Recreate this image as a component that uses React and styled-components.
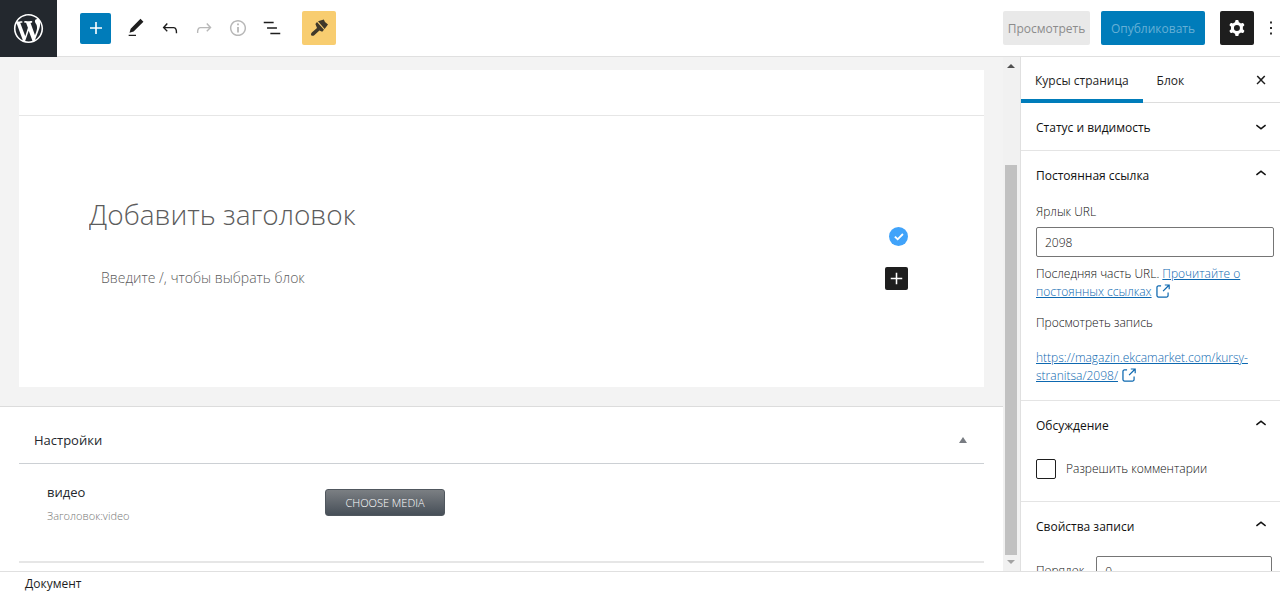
import React, { useState } from "react";
import styled, { createGlobalStyle } from "styled-components";

// Icon outlines, all drawn on a 24x24 grid
const icons = {
  plus: "M18 11.2h-5.2V6h-1.6v5.2H6v1.6h5.2V18h1.6v-5.2H18z",
  pencil: "M20.1 5.1L16.9 2 6.2 12.7l-1.3 4.4 4.5-1.3L20.1 5.1zM4 20.8h8v-1.5H4v1.5z",
  undo: "M18.3 11.7c-.6-.6-1.4-.9-2.3-.9H6.7l2.9-3.3-1.1-1-4.5 5L8.5 16l1-1-2.7-2.7H16c.5 0 .9.2 1.3.5 1 1 1 3.4 1 4.5v.3h1.5v-.2c0-1.5 0-4.3-1.5-5.7z",
  redo: "M15.6 6.5l-1.1 1 2.9 3.3H8c-.9 0-1.7.3-2.3.9-1.4 1.5-1.4 4.2-1.4 5.6v.2h1.5v-.3c0-1.1 0-3.5 1-4.5.3-.3.7-.5 1.3-.5h9.2L14.5 15l1.1 1.1 4.6-4.6-4.6-5z",
  info: "M12 3.2c-4.8 0-8.8 3.9-8.8 8.8 0 4.8 3.9 8.8 8.8 8.8 4.8 0 8.8-3.9 8.8-8.8 0-4.8-4-8.8-8.8-8.8zm0 16c-4 0-7.2-3.3-7.2-7.2C4.8 8 8 4.8 12 4.8s7.2 3.3 7.2 7.2c0 4-3.2 7.2-7.2 7.2zM11 17h2v-6h-2v6zm0-8h2V7h-2v2z",
  list: "M13.8 5.2H3v1.5h10.8V5.2zm-3.6 12v1.5H21v-1.5H10.2zm7.2-6H6.6v1.5h10.8v-1.5z",
  external: "M18.2 17c0 .7-.6 1.2-1.2 1.2H7c-.7 0-1.2-.6-1.2-1.2V7c0-.7.6-1.2 1.2-1.2h3.2V4.2H7C5.5 4.2 4.2 5.5 4.2 7v10c0 1.5 1.2 2.8 2.8 2.8h10c1.5 0 2.8-1.2 2.8-2.8v-3.6h-1.5V17zM14.9 3v1.5h3.7l-6.4 6.4 1.1 1.1 6.4-6.4v3.7h1.5V3h-6.3z",
  up: "M6.5 12.4L12 8l5.5 4.4-.9 1.2L12 10l-4.5 3.6-1-1.2z",
  down: "M17.5 11.6L12 16l-5.5-4.4.9-1.2L12 14l4.5-3.6 1 1.2z",
  close: "M13 11.9l3.3-3.4-1.1-1-3.2 3.3-3.2-3.3-1.1 1 3.3 3.4-3.5 3.6 1 1L12 13l3.5 3.5 1-1z",
  cog: "M10.289 4.836A1 1 0 0111.275 4h1.306a1 1 0 01.987.836l.244 1.466c.787.26 1.503.679 2.108 1.218l1.393-.522a1 1 0 011.216.437l.653 1.13a1 1 0 01-.23 1.273l-1.148.944a6.025 6.025 0 010 2.435l1.149.946a1 1 0 01.23 1.272l-.653 1.13a1 1 0 01-1.216.437l-1.394-.522c-.605.54-1.32.958-2.108 1.218l-.244 1.466a1 1 0 01-.987.836h-1.306a1 1 0 01-.986-.836l-.244-1.466a5.995 5.995 0 01-2.108-1.218l-1.394.522a1 1 0 01-1.217-.436l-.653-1.131a1 1 0 01.23-1.272l1.149-.946a6.026 6.026 0 010-2.435l-1.148-.944a1 1 0 01-.23-1.272l.653-1.131a1 1 0 011.217-.437l1.393.522a5.994 5.994 0 012.108-1.218l.244-1.466zM14.929 12a3 3 0 11-6 0 3 3 0 016 0z",
  more: "M13 19h-2v-2h2v2zm0-6h-2v-2h2v2zm0-6h-2V5h2v2z",
  brush: "M11 5.2L16.8 3.6L18 6L21 8.4L17.6 13zM10 6L17 13.8L15.2 15.8L12.4 14.6L7 19.4Q5.4 20.4 4.2 19.2Q3.4 17.8 4.8 16.4L10 12L8.4 8z",
  check: "M10 17.4L4.8 12.4l2-2L10 13.4l6.9-6.9 2 2z",
};

const Icon = ({ name, size = 24 }) => (
  <svg width={size} height={size} viewBox="0 0 24 24" fill="currentColor" fillRule="evenodd" aria-hidden="true">
    <path d={icons[name]} />
  </svg>
);

const WordPressLogo = () => (
  <svg width="35" height="35" viewBox="-2 -2 24 24" fill="currentColor" aria-hidden="true">
    <path d="M20 10c0-5.51-4.49-10-10-10C4.48 0 0 4.49 0 10c0 5.52 4.48 10 10 10 5.51 0 10-4.48 10-10zM7.78 15.37L4.37 6.22c.55-.02 1.17-.08 1.17-.08.5-.06.44-1.13-.06-1.11 0 0-1.45.11-2.37.11-.18 0-.37 0-.58-.01C4.12 2.69 6.87 1.11 10 1.11c2.33 0 4.45.87 6.05 2.34-.68-.11-1.65.39-1.65 1.58 0 .74.45 1.36.9 2.1.35.61.55 1.36.55 2.46 0 1.49-1.4 5-1.4 5l-3.03-8.37c.54-.02.82-.17.82-.17.5-.05.44-1.25-.06-1.22 0 0-1.44.12-2.38.12-.87 0-2.33-.12-2.33-.12-.5-.03-.56 1.2-.06 1.22l.92.08 1.26 3.41zM17.41 10c.24-.64.74-1.87.43-4.25.7 1.29 1.05 2.71 1.05 4.25 0 3.29-1.73 6.24-4.4 7.78.97-2.59 1.94-5.2 2.92-7.78zM6.1 18.09C3.12 16.65 1.11 13.53 1.11 10c0-1.3.23-2.48.72-3.59C3.25 10.3 4.67 14.2 6.1 18.09zm4.03-6.63l2.58 6.98c-.86.29-1.76.45-2.71.45-.79 0-1.57-.11-2.29-.33.81-2.38 1.62-4.74 2.42-7.1z" />
  </svg>
);

// Sidebar section that folds when its title is clicked
const Panel = ({ title, startOpen, children }) => {
  const [open, setOpen] = useState(startOpen);

  return (
    <PanelSection>
      <PanelTitle>
        <PanelToggle aria-expanded={open} onClick={() => setOpen(!open)}>
          {title}
          <Icon name={open ? "up" : "down"} size={22} />
        </PanelToggle>
      </PanelTitle>
      {open && children}
    </PanelSection>
  );
}

const App = () => {
  const [slug, setSlug] = useState("2098");
  const [order, setOrder] = useState("0");
  const [comments, setComments] = useState(false);
  const [metaOpen, setMetaOpen] = useState(true);

  return (
    <Editor>
      <GlobalStyle />
      <Header>
        <LogoLink href="#" aria-label="WordPress"><WordPressLogo /></LogoLink>
        <Toolbar>
          <InsertButton aria-label="Добавить блок"><Icon name="plus" /></InsertButton>
          <ToolButton aria-label="Инструменты"><Icon name="pencil" size={22} /></ToolButton>
          <ToolButton aria-label="Отменить"><Icon name="undo" size={22} /></ToolButton>
          <ToolButton disabled aria-label="Повторить"><Icon name="redo" size={22} /></ToolButton>
          <ToolButton disabled aria-label="Сведения"><Icon name="info" size={22} /></ToolButton>
          <ToolButton aria-label="Список"><Icon name="list" size={22} /></ToolButton>
          <BrushButton aria-label="Стили"><Icon name="brush" /></BrushButton>
        </Toolbar>
        <Actions>
          <PreviewButton disabled>Просмотреть</PreviewButton>
          <PublishButton disabled>Опубликовать</PublishButton>
          <SettingsButton aria-label="Настройки"><Icon name="cog" /></SettingsButton>
          <MoreButton aria-label="Ещё"><Icon name="more" size={22} /></MoreButton>
        </Actions>
      </Header>

      <Body>
        <Content>
          <Canvas>
            <Sheet>
              <SheetTop />
              <Writing>
                <TitleInput aria-label="Заголовок" placeholder="Добавить заголовок" />
                <CheckRow>
                  <CheckButton aria-label="Проверка"><Icon name="check" size={16} /></CheckButton>
                </CheckRow>
                <BlockRow>
                  <BlockInput aria-label="Блок" placeholder="Введите /, чтобы выбрать блок" />
                  <AddBlockButton aria-label="Добавить блок"><Icon name="plus" size={23} /></AddBlockButton>
                </BlockRow>
              </Writing>
            </Sheet>
          </Canvas>
          <MetaBoxes>
            <MetaHeader>
              <MetaTitle>Настройки</MetaTitle>
              <MetaToggle aria-label="Свернуть" onClick={() => setMetaOpen(!metaOpen)}>
                <Arrow $down={!metaOpen} $height={6} $color="#787c82" />
              </MetaToggle>
            </MetaHeader>
            {
              metaOpen &&
              <MetaBody>
                <MetaLabel>
                  <MetaName>видео</MetaName>
                  <MetaHint>Заголовок:video</MetaHint>
                </MetaLabel>
                <MediaButton>CHOOSE MEDIA</MediaButton>
              </MetaBody>
            }
          </MetaBoxes>
        </Content>

        <ScrollBar aria-hidden="true">
          <Arrow $height={4} $color="#505050" />
          <ScrollTrack><ScrollThumb /></ScrollTrack>
          <Arrow $down $height={4} $color="#a3a3a3" />
        </ScrollBar>

        <Sidebar>
          <Tabs>
            <Tab $active>Курсы страница</Tab>
            <Tab>Блок</Tab>
            <CloseButton aria-label="Закрыть"><Icon name="close" size={24} /></CloseButton>
          </Tabs>
          <Panel title="Статус и видимость" />
          <Panel title="Постоянная ссылка" startOpen>
            <PanelContent>
              <FieldLabel htmlFor="slug">Ярлык URL</FieldLabel>
              <TextInput id="slug" value={slug} onChange={(e) => setSlug(e.target.value)} />
              <Paragraph>
                Последняя часть URL. <Link href="#">Прочитайте о постоянных ссылках<Icon name="external" size={19} /></Link>
              </Paragraph>
              <Caption>Просмотреть запись</Caption>
              <Paragraph>
                <Link href="#">https://magazin.ekcamarket.com/kursy-stranitsa/2098/<Icon name="external" size={19} /></Link>
              </Paragraph>
            </PanelContent>
          </Panel>
          <Panel title="Обсуждение" startOpen>
            <CheckLabel>
              <CheckBox type="checkbox" checked={comments} onChange={() => setComments(!comments)} />
              Разрешить комментарии
            </CheckLabel>
          </Panel>
          <Panel title="Свойства записи" startOpen>
            <OrderRow>
              <label htmlFor="order">Порядок</label>
              <TextInput id="order" value={order} onChange={(e) => setOrder(e.target.value)} />
            </OrderRow>
          </Panel>
        </Sidebar>
      </Body>

      <Footer>Документ</Footer>
    </Editor>
  );
}

export default App;

const GlobalStyle = createGlobalStyle`
  * {
    box-sizing: border-box;
  }
  body {
    margin: 0;
    color: #1e1e1e;
    background-color: white;
    font-family: "Open Sans", "Noto Sans", sans-serif;
    font-size: 12px;
    line-height: 18px;
  }
  button, input {
    font: inherit;
    color: inherit;
  }
  svg {
    flex: none;
  }
`

const Editor = styled.div`
  height: 100vh;
  display: flex;
  flex-direction: column;
`

const Header = styled.header`
  flex: none;
  display: flex;
  align-items: stretch;
  height: 57px;
  border-bottom: 1px solid #e0e0e0;
`

const LogoLink = styled.a`
  width: 57px;
  height: 57px;
  display: flex;
  align-items: center;
  justify-content: center;
  color: white;
  background-color: #23282e;
`

const Toolbar = styled.div`
  flex: 1;
  display: flex;
  align-items: center;
  padding-left: 23px;
`

const IconButton = styled.button`
  display: flex;
  align-items: center;
  justify-content: center;
  padding: 0;
  border: none;
  border-radius: 2px;
  background: none;
`

const InsertButton = styled(IconButton)`
  width: 31px;
  height: 31px;
  margin-right: 8px;
  color: white;
  background-color: #007cba;
`

const ToolButton = styled(IconButton)`
  width: 34px;
  height: 34px;

  &:disabled {
    color: #b8b8b8;
  }
`

const BrushButton = styled(IconButton)`
  width: 34px;
  height: 34px;
  margin-left: 13px;
  color: #40392a;
  background-color: #f8cd70;
`

// Publish controls on the right of the header
const Actions = styled.div`
  display: flex;
  align-items: center;
`

const TextButton = styled.button`
  height: 34px;
  border: none;
  border-radius: 2px;
  padding: 2px 0 0;
`

const PreviewButton = styled(TextButton)`
  width: 87px;
  margin-right: 11px;
  color: #8c8c8c;
  background-color: #e9e9e9;
`

const PublishButton = styled(TextButton)`
  width: 104px;
  margin-right: 15px;
  color: #66b0d6;
  background-color: #007cba;
`

const SettingsButton = styled(IconButton)`
  width: 34px;
  height: 34px;
  color: white;
  background-color: #1e1e1e;
`

const MoreButton = styled(IconButton)`
  width: 26px;
  height: 34px;
  padding-left: 8px;
`

const Body = styled.div`
  flex: 1;
  min-height: 0;
  display: flex;
`

const Content = styled.main`
  flex: 1;
  min-width: 0;
  overflow: hidden;
`

const Canvas = styled.div`
  padding: 13px 19px 19px;
  background-color: #f3f3f3;
`

const Sheet = styled.div`
  background-color: white;
`

const SheetTop = styled.div`
  height: 46px;
  border-bottom: 1px solid #e6e6e6;
`

const Writing = styled.div`
  padding: 76px 76px 97px 70px;
`

const PlainInput = styled.input`
  flex: 1;
  width: 100%;
  padding: 0;
  border: none;
  outline: none;
  background: none;
  font-weight: 320;

  &::placeholder {
    color: #5c5c5c;
    opacity: 1;
  }
`

const TitleInput = styled(PlainInput)`
  display: block;
  height: 44px;
  font-size: 28px;
`

const CheckRow = styled.div`
  display: flex;
  justify-content: flex-end;
  height: 31px;
`

const CheckButton = styled(IconButton)`
  width: 19px;
  height: 19px;
  margin-top: -9px;
  border-radius: 50%;
  color: white;
  background-color: #40a3fa;
`

const BlockRow = styled.div`
  display: flex;
  align-items: center;
  padding-left: 12px;
`

const BlockInput = styled(PlainInput)`
  height: 23px;
  padding-bottom: 3px;
  font-size: 14px;
`

const AddBlockButton = styled(IconButton)`
  width: 23px;
  height: 23px;
  color: white;
  background-color: #1e1e1e;
`

const MetaBoxes = styled.section`
  padding: 0 19px;
  border-top: 1px solid #dcdcdc;
`

const MetaHeader = styled.div`
  display: flex;
  align-items: center;
  justify-content: space-between;
  height: 57px;
  padding: 10px 15px 0;
  border-bottom: 1px solid #ccd0d4;
`

const MetaTitle = styled.h2`
  margin: 0;
  font-size: 13px;
  font-weight: 520;
  color: #23282d;
`

const MetaToggle = styled(IconButton)`
  width: 12px;
  height: 20px;
`

const Arrow = styled.span`
  width: 0;
  height: 0;
  border: 4px solid transparent;
  border-top: ${props => props.$down ? `${props.$height}px solid ${props.$color}` : "none"};
  border-bottom: ${props => props.$down ? "none" : `${props.$height}px solid ${props.$color}`};
`

const MetaBody = styled.div`
  display: flex;
  align-items: flex-start;
  height: 99px;
  padding: 19px 28px;
  border-bottom: 2px solid #e6e6e6;
`

const MetaLabel = styled.div`
  width: 278px;
`

const MetaName = styled.div`
  font-size: 13px;
  font-weight: 520;
  color: #23282d;
`

const MetaHint = styled.div`
  margin-top: 6px;
  font-size: 11px;
  font-weight: 320;
  color: #777;
`

const MediaButton = styled.button`
  width: 120px;
  height: 27px;
  margin-top: 6px;
  padding: 0;
  border: 1px solid #50575e;
  border-radius: 3px;
  font-size: 11px;
  font-weight: 350;
  color: white;
  background: linear-gradient(#7b7f83, #474f58);
`

const ScrollBar = styled.div`
  flex: none;
  display: flex;
  flex-direction: column;
  align-items: center;
  width: 17px;
  padding: 7px 3px 7px 2px;
  background-color: #f1f1f1;
`

const ScrollTrack = styled.div`
  flex: 1;
  display: flex;
  flex-direction: column;
  justify-content: flex-end;
  width: 12px;
  margin: 5px 0;
`

const ScrollThumb = styled.div`
  height: 81%;
  background-color: #c1c1c1;
`

const Sidebar = styled.aside`
  flex: none;
  width: 260px;
  border-left: 1px solid #e0e0e0;
  overflow: hidden;
`

const Tabs = styled.div`
  display: flex;
  height: 46px;
  border-bottom: 1px solid #ddd;
`

const Tab = styled.button`
  height: 46px;
  padding: 2px 14px 0;
  border: none;
  background: none;
  box-shadow: ${props => props.$active ? "inset 0 -4px #007cba" : "none"};
`

const CloseButton = styled(IconButton)`
  width: 24px;
  margin-left: auto;
  margin-right: 7px;
`

const PanelSection = styled.section`
  border-bottom: 1px solid #e4e4e4;
  font-weight: 350;
  color: #111;
`

const PanelTitle = styled.h2`
  margin: 0;
  font-size: 12px;
  font-weight: 520;
`

const PanelToggle = styled.button`
  display: flex;
  align-items: center;
  justify-content: space-between;
  width: 100%;
  height: 47px;
  padding: 2px 8px 0 15px;
  border: none;
  background: none;

  svg {
    margin-top: -4px;
  }
`

const PanelContent = styled.div`
  padding: 5px 6px 15px 15px;
`

const FieldLabel = styled.label`
  display: block;
  margin-bottom: 6px;
`

const TextInput = styled.input`
  width: 100%;
  height: 30px;
  padding: 0 8px;
  border: 1px solid #757575;
  border-radius: 2px;
  background-color: white;
`

const Paragraph = styled.p`
  margin: 8px 0 0;
`

const Caption = styled.div`
  margin: 13px 0 17px;
`

const Link = styled.a`
  color: #0d68b0;

  svg {
    margin-left: 1px;
    vertical-align: -5px;
    margin-top: -4px;
  }
`

const CheckLabel = styled.label`
  display: flex;
  align-items: center;
  gap: 10px;
  padding: 11px 15px 22px;
`

const CheckBox = styled.input`
  appearance: none;
  width: 20px;
  height: 20px;
  margin: 0;
  border: 1px solid #1e1e1e;
  border-radius: 2px;

  &:checked {
    background-color: #007cba;
  }
`

const OrderRow = styled.div`
  display: flex;
  align-items: center;
  gap: 12px;
  padding: 7px 8px 16px 15px;
`

const Footer = styled.footer`
  flex: none;
  height: 23px;
  padding: 3px 25px;
  border-top: 1px solid #e0e0e0;
`
